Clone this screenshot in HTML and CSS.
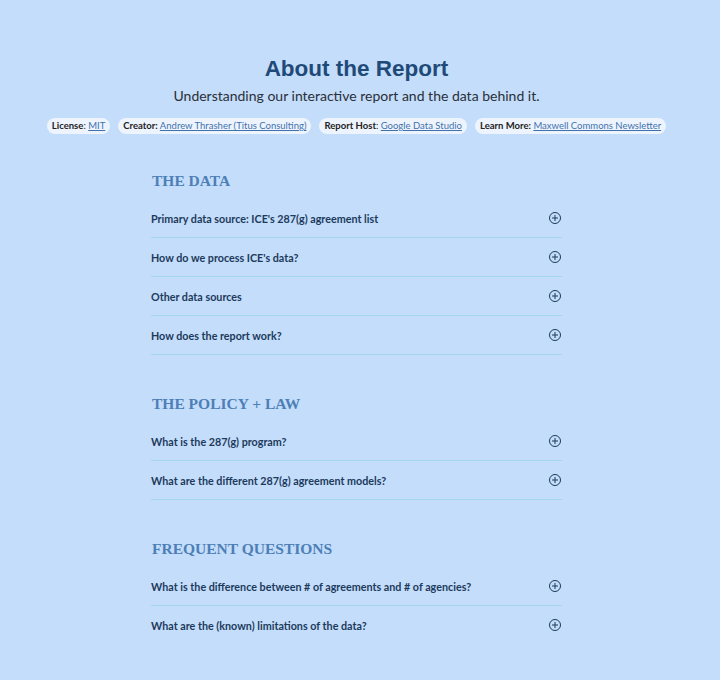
FILE: index.html
```html
<html lang="en">
<head>
    <meta charset="UTF-8">
    <title>About the Report</title>
    <link rel="stylesheet" href="styles.css">
</head>
<body>
<div class="page">
    <div class="header">
        <h1>About the Report</h1>
        <p class="sub">Understanding our interactive report and the data behind it.</p>
        <div class="chips">
            <span class="chip"><b>License</b>: <a href="javascript:;">MIT</a></span>
            <span class="chip"><b>Creator:</b> <a href="javascript:;">Andrew Thrasher (Titus Consulting)</a></span>
            <span class="chip"><b>Report Host</b>: <a href="javascript:;">Google Data Studio</a></span>
            <span class="chip"><b>Learn More:</b> <a href="javascript:;">Maxwell Commons Newsletter</a></span>
        </div>
    </div>
    <div class="content">
        <div class="section">
            <h2>THE DATA</h2>
            <div class="item"><span>Primary data source: ICE's 287(g) agreement list</span><i class="plus"></i></div>
            <div class="item"><span>How do we process ICE's data?</span><i class="plus"></i></div>
            <div class="item"><span>Other data sources</span><i class="plus"></i></div>
            <div class="item"><span>How does the report work?</span><i class="plus"></i></div>
        </div>
        <div class="section">
            <h2>THE POLICY + LAW</h2>
            <div class="item"><span>What is the 287(g) program?</span><i class="plus"></i></div>
            <div class="item"><span>What are the different 287(g) agreement models?</span><i class="plus"></i></div>
        </div>
        <div class="section">
            <h2>FREQUENT QUESTIONS</h2>
            <div class="item"><span>What is the difference between # of agreements and # of agencies?</span><i class="plus"></i></div>
            <div class="item last"><span>What are the (known) limitations of the data?</span><i class="plus"></i></div>
        </div>
    </div>
</div>
</body>
</html>
```

FILE: styles.css
```css
*{
    padding:0px;
    margin:0px;
}
body{
    background:#c3ddfb;
    font-family:Lato,"Liberation Sans",sans-serif;
    color:#1e3a5c;
}
a{
    color:#3f72ad;
    text-decoration:underline;
}
.page{
    padding:55px 7px 20px 0px;
}
.header{
    text-align:center;
}
.header h1{
    font-family:"Liberation Sans",Arial,sans-serif;
    font-size:22.5px;
    line-height:28px;
    font-weight:bold;
    color:#1f4a78;
}
.header .sub{
    font-size:14px;
    font-weight:normal;
    line-height:22px;
    color:#2a2f38;
    margin-top:2px;
}
.chips{
    display:flex;
    justify-content:center;
    gap:8px;
    margin-top:11px;
}
.chip{
    background:#eef4fd;
    border-radius:9px;
    font-size:9.5px;
    line-height:16px;
    padding:0px 5px;
    color:#222;
}
.chip b{
    font-weight:bold;
}
.content{
    width:411px;
    margin:0px auto;
    padding-top:35px;
}
.section{
    margin-bottom:37px;
}
.section h2{
    font-family:"Liberation Serif","DejaVu Serif",serif;
    font-size:15.5px;
    font-weight:bold;
    line-height:24px;
    color:#4d7fb6;
    padding-left:1px;
    margin-bottom:6px;
}
.item{
    display:flex;
    align-items:center;
    justify-content:space-between;
    height:38px;
    border-bottom:1px solid #a4d6ec;
    font-size:10.75px;
    font-weight:bold;
    color:#1d3a5c;
}
.item.last{
    border-bottom:none;
}
.plus{
    position:relative;
    width:10px;
    height:10px;
    border:1px solid #1d3a5c;
    border-radius:50%;
    margin-right:1px;
}
.plus:before,
.plus:after{
    content:"";
    position:absolute;
    background:#1d3a5c;
    left:50%;
    top:50%;
    transform:translate(-50%,-50%);
}
.plus:before{
    width:6px;
    height:1px;
}
.plus:after{
    width:1px;
    height:6px;
}
```
